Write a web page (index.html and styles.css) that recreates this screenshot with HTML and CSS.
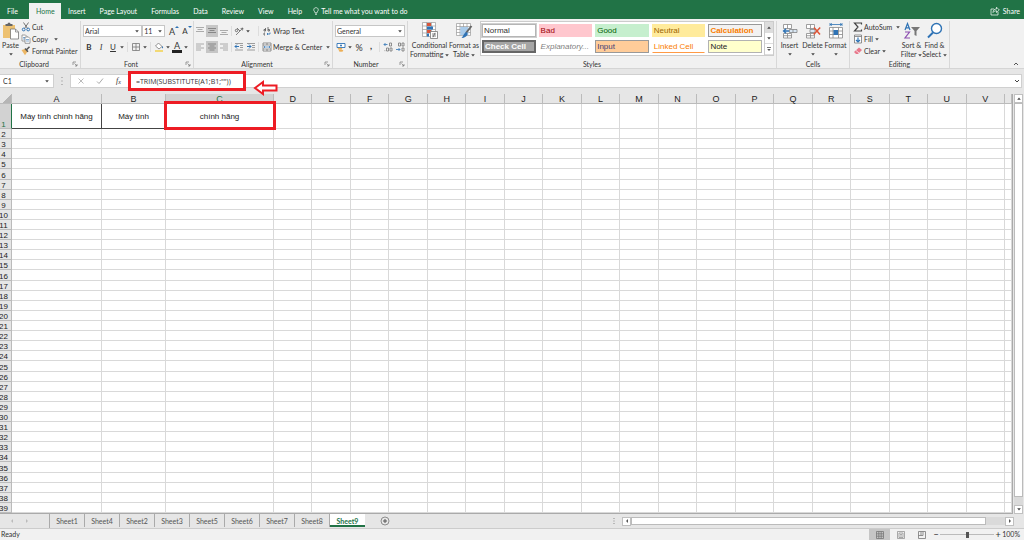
FILE: index.html
```html
<!DOCTYPE html>
<html lang="en">
<head>
<meta charset="utf-8">
<title>Spreadsheet</title>
<link rel="stylesheet" href="styles.css">
</head>
<body>
<svg class="defs" aria-hidden="true">
  <symbol id="caret" viewBox="0 0 4 3"><path d="M0.200 .3h3.600L2 2.600z" fill="#444"/></symbol>
  <symbol id="launch" viewBox="0 0 6 6"><path d="M1 4V1h3M2.500 2.500L5 5M5 3v2H3" fill="none" stroke="#777" stroke-width=".7"/></symbol>
  <symbol id="lines" viewBox="0 0 10 10"><path d="M1 2.500h8M2.500 4.500h5M1 6.500h8" fill="none" stroke="#777" stroke-width=".8"/></symbol>
  <symbol id="cellgrid" viewBox="0 0 16 16"><path d="M1.500 1.500h8v4h-8zM5.500 1.500v4M1.500 10.500h8v4.500h-8zM5.500 10.500v4.500M1.500 12.700h8" fill="#fff" stroke="#888" stroke-width=".8"/></symbol>
</svg>

<header class="menubar">
  <nav class="menu">
    <a href="#">File</a><a href="#" class="current">Home</a><a href="#">Insert</a><a href="#">Page Layout</a><a href="#">Formulas</a><a href="#">Data</a><a href="#">Review</a><a href="#">View</a><a href="#">Help</a>
  </nav>
  <button class="tell"><svg class="i8" viewBox="0 0 8 8"><path d="M3 6V5C1 3.500 1.500 .7 4 .7S7 3.500 5 5v1zM3 7.300h2" fill="none" stroke="#fff" stroke-width=".7"/></svg>Tell me what you want to do</button>
  <button class="share"><svg class="i10" viewBox="0 0 10 10"><path d="M4 3H1v6h7V6M3 6.500C3 4 4.500 3 6.500 3V1.200L9.300 4 6.500 6.500V4.800C5 4.800 4 5.200 3 6.500z" fill="none" stroke="#fff" stroke-width=".7"/></svg>Share</button>
</header>

<section class="ribbon">
  <div class="group clipboard">
    <div class="body">
      <button class="big paste"><svg class="i18" viewBox="0 0 18 18"><path d="M1 3h12v13H1z" fill="#edc171"/><path d="M3.500 4V2h2L6 .8h2L8.500 2h2v2z" fill="#666"/><path d="M8.500 7h5l3 3v7h-8z" fill="#fff" stroke="#777" stroke-width=".8"/><path d="M13.500 7v3h3" fill="none" stroke="#777" stroke-width=".7"/></svg><span>Paste</span><svg class="caret"><use href="#caret"/></svg></button>
      <div class="stack">
        <button><svg class="i10" viewBox="0 0 10 10"><path d="M2.500 .5l4 6M7.500 .5l-4 6" stroke="#666" stroke-width=".9"/><circle cx="2.700" cy="7.500" r="1.400" fill="none" stroke="#2f73b5"/><circle cx="7.200" cy="7.500" r="1.400" fill="none" stroke="#2f73b5"/></svg>Cut</button>
        <button><svg class="i10" viewBox="0 0 10 10"><path d="M1 1h3.500l1.500 1.500V7H1z" fill="#fff" stroke="#777" stroke-width=".7"/><path d="M4 3h3.500L9 4.500V9.300H4z" fill="#fff" stroke="#777" stroke-width=".7"/><path d="M2 3.500h2M2 5h2M5 5.500h3M5 7h3" stroke="#2f73b5" stroke-width=".6"/></svg>Copy<svg class="caret far"><use href="#caret"/></svg></button>
        <button><svg class="i10" viewBox="0 0 10 10"><path d="M.5 4L4 3l2.500 2.500L4 9.300z" fill="#edb765"/><path d="M4 2.500L7 5.700M5.500 3.800L8.500 .8" stroke="#555" stroke-width="1.500"/></svg>Format Painter</button>
      </div>
    </div>
    <div class="caption">Clipboard<svg class="launch"><use href="#launch"/></svg></div>
  </div>

  <div class="group font">
    <div class="body rows">
      <div class="row">
        <span class="pick fontname"><select aria-label="Font"><option>Arial</option></select><svg class="caret"><use href="#caret"/></svg></span>
        <span class="pick fontsize"><select aria-label="Font size"><option>11</option></select><svg class="caret"><use href="#caret"/></svg></span>
        <button class="tool grow" aria-label="Increase font size"><span>A</span><svg class="tick" viewBox="0 0 4 4"><path d="M0 3L2 1l2 2z" fill="#2f73b5"/></svg></button>
        <button class="tool shrink" aria-label="Decrease font size"><span>A</span><svg class="tick" viewBox="0 0 4 4"><path d="M0 1h4L2 3z" fill="#2f73b5"/></svg></button>
      </div>
      <div class="row">
        <button class="tool bold">B</button><button class="tool italic">I</button><button class="tool under">U</button><svg class="caret"><use href="#caret"/></svg>
        <i class="sep"></i>
        <button class="tool" aria-label="Borders"><svg class="i10" viewBox="0 0 10 10"><path d="M1.500 1.500h7v7h-7zM5 1.500v7M1.500 5h7" fill="none" stroke="#777" stroke-width=".8"/></svg></button><svg class="caret"><use href="#caret"/></svg>
        <i class="sep"></i>
        <button class="tool" aria-label="Fill color"><svg class="i10" viewBox="0 0 10 10"><path d="M4.500 1L8 4.500 5 7 1.500 4z" fill="#fff" stroke="#777" stroke-width=".8"/><path d="M8.500 4c.8 1 .8 2 0 2.500-.7-.5-.7-1.500 0-2.500z" fill="#2f73b5"/><path d="M1 8h8v2H1z" fill="#f2d975"/></svg></button><svg class="caret"><use href="#caret"/></svg>
        <button class="tool fontcolor" aria-label="Font color">A</button><svg class="caret"><use href="#caret"/></svg>
      </div>
    </div>
    <div class="caption">Font<svg class="launch"><use href="#launch"/></svg></div>
  </div>

  <div class="group align">
    <div class="body rows">
      <div class="row">
        <button class="tool" aria-label="Top align"><svg class="i10" viewBox="0 0 10 10"><path d="M1 1.500h8M2.500 3.500h5M1 5.500h8" stroke="#999" stroke-width=".8"/></svg></button>
        <button class="tool on" aria-label="Middle align"><svg class="i10"><use href="#lines"/></svg></button>
        <button class="tool" aria-label="Bottom align"><svg class="i10" viewBox="0 0 10 10"><path d="M1 4.500h8M2.500 6.500h5M1 8.500h8" stroke="#999" stroke-width=".8"/></svg></button>
        <i class="sep"></i>
        <button class="tool" aria-label="Orientation"><svg class="i10" viewBox="0 0 10 10"><path d="M2 9L9 2M9 2L6.500 2.700M9 2L8.400 4.500" fill="none" stroke="#666" stroke-width=".8"/><circle cx="2.500" cy="4.500" r="1.200" fill="none" stroke="#555" stroke-width=".8"/><path d="M3 2l3 3" stroke="#555" stroke-width=".8"/></svg></button><svg class="caret"><use href="#caret"/></svg>
        <i class="sep wide"></i>
        <button class="labelled"><svg class="i10" viewBox="0 0 10 10"><path d="M3.500 2v3M6 1v4M6 3.500h1.500V5H6M3.500 3.500H2V5h1.500M3 9H2V7h1" fill="none" stroke="#555" stroke-width=".8"/><path d="M8 6.500V8H5M6 7L5 8l1 1" fill="none" stroke="#2f73b5" stroke-width=".8"/></svg>Wrap Text</button>
      </div>
      <div class="row">
        <button class="tool" aria-label="Align left"><svg class="i10" viewBox="0 0 10 10"><path d="M1 2h8M1 4h5M1 6h8M1 8h5" stroke="#999" stroke-width=".8"/></svg></button>
        <button class="tool on" aria-label="Center"><svg class="i10" viewBox="0 0 10 10"><path d="M1 2h8M2.500 4h5M1 6h8M2.500 8h5" stroke="#777" stroke-width=".8"/></svg></button>
        <button class="tool" aria-label="Align right"><svg class="i10" viewBox="0 0 10 10"><path d="M1 2h8M4 4h5M1 6h8M4 8h5" stroke="#999" stroke-width=".8"/></svg></button>
        <i class="sep"></i>
        <button class="tool" aria-label="Decrease indent"><svg class="i10" viewBox="0 0 10 10"><path d="M1 1.500h8M6 3.500h3M6 5.500h3M1 8h8" stroke="#888" stroke-width=".8"/><path d="M5 4.500H1M3 2.500l-2 2 2 2" fill="none" stroke="#2f73b5"/></svg></button>
        <button class="tool" aria-label="Increase indent"><svg class="i10" viewBox="0 0 10 10"><path d="M1 1.500h8M6 3.500h3M6 5.500h3M1 8h8" stroke="#888" stroke-width=".8"/><path d="M1 4.500h4M3 2.500l2 2-2 2" fill="none" stroke="#2f73b5"/></svg></button>
        <i class="sep wide2"></i>
        <button class="labelled"><svg class="i10" viewBox="0 0 10 10"><path d="M1 1h8v8H1zM1 3h8M1 7h8M5 1v2M5 7v2" fill="#fff" stroke="#777" stroke-width=".8"/><path d="M2 5h6M3 4L2 5l1 1M7 4l1 1-1 1" fill="none" stroke="#2f73b5" stroke-width=".7"/></svg>Merge &amp; Center<svg class="caret near"><use href="#caret"/></svg></button>
      </div>
    </div>
    <div class="caption">Alignment<svg class="launch"><use href="#launch"/></svg></div>
  </div>

  <div class="group number">
    <div class="body rows">
      <div class="row"><span class="pick format"><select aria-label="Number format"><option>General</option></select><svg class="caret"><use href="#caret"/></svg></span></div>
      <div class="row">
        <button class="tool" aria-label="Accounting format"><svg class="i10" viewBox="0 0 10 10"><path d="M1 1.500h8v4H1z" fill="#fff" stroke="#2f73b5" stroke-width=".9"/><circle cx="5" cy="3.500" r="1" fill="#2f73b5"/><ellipse cx="4" cy="6.800" rx="2.300" ry="1" fill="#edae55"/><ellipse cx="5" cy="8.700" rx="2.300" ry="1" fill="#edae55"/></svg></button><svg class="caret"><use href="#caret"/></svg>
        <button class="tool percent">%</button><button class="tool comma">,</button>
        <i class="sep"></i>
        <button class="tool" aria-label="Increase decimal"><svg class="i10" viewBox="0 0 10 10"><path d="M4.500 2.500H1M2.500 1L1 2.500 2.500 4" fill="none" stroke="#2f73b5" stroke-width=".8"/><path d="M6.500 1h2v3h-2zM3.500 6h2v3h-2zM7 6h2v3H7zM1.500 8.700h.8" fill="none" stroke="#777" stroke-width=".8"/></svg></button>
        <button class="tool" aria-label="Decrease decimal"><svg class="i10" viewBox="0 0 10 10"><path d="M1 7.500h4M3.500 6L5 7.500 3.500 9" fill="none" stroke="#2f73b5" stroke-width=".8"/><path d="M3.500 1h2v3h-2zM7 1h2v3H7zM7 6h2v3H7z" fill="none" stroke="#777" stroke-width=".8"/></svg></button>
      </div>
    </div>
    <div class="caption">Number<svg class="launch"><use href="#launch"/></svg></div>
  </div>

  <div class="group styles">
    <div class="body">
      <button class="big cond"><svg class="i18" viewBox="0 0 18 18"><path d="M1.500 .5h13v14h-13zM5.500 .5v14M10.500 .5v14M1.500 4h13M1.500 7.500h13M1.500 11h13" fill="#fff" stroke="#999" stroke-width=".7"/><path d="M6 1h4v3H6zM6 8h4v3H6z" fill="#d8553a"/><path d="M6 4.500h6v3H6zM6 11.500h2v3H6z" fill="#2f73b5"/><path d="M9.500 9.500h7v7h-7z" fill="#fff" stroke="#777" stroke-width=".8"/><path d="M11 12h4M11 14h4M14 10.800l-2 4.500" stroke="#555" stroke-width=".7"/></svg><span>Conditional<br>Formatting <svg class="caret"><use href="#caret"/></svg></span></button>
      <button class="big fmt"><svg class="i18" viewBox="0 0 18 18"><path d="M1.500 1.500h14v12h-14zM5 1.500v12M8.500 1.500v12M12 1.500v12M1.500 4.500h14M1.500 7.500h14M1.500 10.500h14" fill="#fff" stroke="#999" stroke-width=".7"/><path d="M5.300 5h8v8.200h-8z" fill="#a9cbea"/><path d="M16.500 4L11 11" stroke="#666" stroke-width="2"/><path d="M11.500 10c1.500 1 1.500 3-.5 4.500-1.500 1-3 1.500-4.500 1.500 2-1.500 2-5 5-6z" fill="#2f73b5"/></svg><span>Format as<br>Table <svg class="caret"><use href="#caret"/></svg></span></button>
      <div class="gallery">
        <div class="swatches">
          <button class="normal">Normal</button><button class="bad">Bad</button><button class="good">Good</button><button class="neutral">Neutral</button><button class="calc">Calculation</button>
          <button class="check">Check Cell</button><button class="expl">Explanatory...</button><button class="inputcell">Input</button><button class="linked">Linked Cell</button><button class="note">Note</button>
        </div>
        <div class="scroller"><button class="off" aria-label="Previous styles"><svg class="caret flip"><use href="#caret"/></svg></button><button aria-label="Next styles"><svg class="caret"><use href="#caret"/></svg></button><button aria-label="More styles"><svg class="more" viewBox="0 0 4 5"><path d="M0 .5h4" stroke="#555" stroke-width=".8"/><path d="M.2 2h3.600L2 4z" fill="#555"/></svg></button></div>
      </div>
    </div>
    <div class="caption">Styles</div>
  </div>

  <div class="group cells">
    <div class="body">
      <button class="big"><svg class="i16" viewBox="0 0 16 16"><use href="#cellgrid"/><path d="M7.500 6.500H15v3H7.500zM11 6.500v3" fill="#d8e6f3" stroke="#777" stroke-width=".7"/><path d="M7 8H1.500M4 5.700L1.500 8 4 10.300" fill="none" stroke="#2f73b5" stroke-width="1.300"/></svg><span>Insert</span><svg class="caret"><use href="#caret"/></svg></button>
      <button class="big"><svg class="i16" viewBox="0 0 16 16"><use href="#cellgrid"/><path d="M5 6.500h5v3H5z" fill="#d8e6f3" stroke="#777" stroke-width=".7"/><path d="M9 4.500l6 7M15.200 4.500l-6.500 7" stroke="#df5537" stroke-width="1.500"/></svg><span>Delete</span><svg class="caret"><use href="#caret"/></svg></button>
      <button class="big"><svg class="i16" viewBox="0 0 16 16"><path d="M1.500 4.500h13V15h-13zM5 4.500V15M10.500 4.500V15M1.500 8h13M1.500 11.500h13" fill="#fff" stroke="#888" stroke-width=".8"/><path d="M5.500 7h4.500v5H5.500z" fill="#2f73b5"/><path d="M2 1.500h12M2 0v3M14 0v3M4 .3L2.500 1.500 4 2.700M12 .3l1.500 1.200L12 2.700" fill="none" stroke="#2f73b5" stroke-width=".8"/></svg><span>Format</span><svg class="caret"><use href="#caret"/></svg></button>
    </div>
    <div class="caption">Cells</div>
  </div>

  <div class="group editing">
    <div class="body">
      <div class="stack">
        <button><svg class="i10" viewBox="0 0 10 10"><path d="M8.500 2.500V1h-7L5 5 1.500 9h7V7.500" fill="none" stroke="#444" stroke-width="1.200"/></svg>AutoSum<svg class="caret near"><use href="#caret"/></svg></button>
        <button><svg class="i10" viewBox="0 0 10 10"><path d="M1.500 1h7v8h-7zM1.500 2.500h7" fill="#fff" stroke="#777" stroke-width=".8"/><path d="M5 3.500V8M3 6l2 2 2-2" fill="none" stroke="#2f73b5" stroke-width="1.200"/></svg>Fill<svg class="caret"><use href="#caret"/></svg></button>
        <button><svg class="i10" viewBox="0 0 10 10"><path d="M6 1.500L9 4 5 8H3L1 6z" fill="#e8798c"/><path d="M3 4.500l3 2.500" stroke="#fff" stroke-width=".7"/></svg>Clear<svg class="caret"><use href="#caret"/></svg></button>
      </div>
      <button class="big"><svg class="i18" viewBox="0 0 18 18"><path d="M2 8L4.500 1.500 7 8M3 5.800h3" fill="none" stroke="#2f73b5" stroke-width="1.200"/><path d="M2 10h4.500L2 16h5" fill="none" stroke="#8c4fb0" stroke-width="1.200"/><path d="M8 5h9l-3.500 4v5l-2-1V9z" fill="#777"/></svg><span>Sort &amp;<br>Filter <svg class="caret"><use href="#caret"/></svg></span></button>
      <button class="big"><svg class="i18" viewBox="0 0 18 18"><circle cx="10.500" cy="6.500" r="5" fill="#fff" stroke="#2f73b5" stroke-width="1.400"/><path d="M7 10.500L2 15.500" stroke="#2f73b5" stroke-width="2"/></svg><span>Find &amp;<br>Select <svg class="caret"><use href="#caret"/></svg></span></button>
    </div>
    <div class="caption">Editing</div>
  </div>
  <button class="collapse" aria-label="Collapse the ribbon"><svg class="i8" viewBox="0 0 8 8"><path d="M2 5l2-2 2 2" fill="none" stroke="#555"/></svg></button>
</section>

<section class="formulabar">
  <span class="namebox"><input aria-label="Name box" value="C1"><svg class="caret"><use href="#caret"/></svg></span>
  <svg class="dots" viewBox="0 0 4 10"><path d="M2 1v1M2 4.500v1M2 8v1" stroke="#999" stroke-width="1.200"/></svg>
  <div class="entry">
    <button class="tool" aria-label="Cancel"><svg class="i8" viewBox="0 0 8 8"><path d="M1.500 1.500l5 5M6.500 1.500l-5 5" stroke="#aaa" stroke-width=".8"/></svg></button>
    <button class="tool" aria-label="Enter"><svg class="i8" viewBox="0 0 8 8"><path d="M1 4.500L3 6.500 7 1.500" fill="none" stroke="#aaa"/></svg></button>
    <button class="tool fx">f<small>x</small></button>
    <div class="formula"><input aria-label="Formula" value="=TRIM(SUBSTITUTE(A1;B1;&quot;&quot;))">
      <svg class="arrow" viewBox="0 0 26 16"><path d="M2 8l8-6v3.500h13.500v5H10V14z" fill="#fff" stroke="#ed1c24" stroke-width="2"/></svg>
    </div>
    <button class="expand" aria-label="Expand formula bar"><svg class="i8" viewBox="0 0 8 8"><path d="M2 3l2 2 2-2" fill="none" stroke="#444"/></svg></button>
  </div>
</section>

<main class="work">
  <table class="sheet" id="sheet"></table>
  <div class="vscroll"><button aria-label="Scroll up"><svg class="caret flip"><use href="#caret"/></svg></button><div class="track"><div class="thumb"></div></div><button aria-label="Scroll down"><svg class="caret"><use href="#caret"/></svg></button></div>
</main>

<footer>
  <div class="tabs">
    <div class="paging"><button aria-label="Previous sheet"><svg class="i6" viewBox="0 0 6 6"><path d="M4 1L2 3l2 2z" fill="#bbb"/></svg></button><button aria-label="Next sheet"><svg class="i6" viewBox="0 0 6 6"><path d="M2 1l2 2-2 2z" fill="#bbb"/></svg></button></div>
    <nav class="sheets"><a href="#">Sheet1</a><a href="#">Sheet4</a><a href="#">Sheet2</a><a href="#">Sheet3</a><a href="#">Sheet5</a><a href="#">Sheet6</a><a href="#">Sheet7</a><a href="#">Sheet8</a><a href="#" class="current">Sheet9</a></nav>
    <button class="add" aria-label="New sheet"><svg class="i10" viewBox="0 0 10 10"><circle cx="5" cy="5" r="4" fill="none" stroke="#777" stroke-width=".8"/><path d="M5 3v4M3 5h4" stroke="#555"/></svg></button>
    <div class="hscroll"><svg class="dots" viewBox="0 0 4 10"><path d="M2 2v1M2 4.500v1M2 7v1" stroke="#999" stroke-width="1.200"/></svg><button aria-label="Scroll left"><svg class="i6" viewBox="0 0 6 6"><path d="M4 1L2 3l2 2z" fill="#555"/></svg></button><div class="track"><div class="thumb"></div></div><button aria-label="Scroll right"><svg class="i6" viewBox="0 0 6 6"><path d="M2 1l2 2-2 2z" fill="#555"/></svg></button></div>
  </div>
  <div class="status">
    <span class="ready">Ready</span>
    <button class="view on" aria-label="Normal view"><svg class="i8" viewBox="0 0 8 8"><path d="M.5 .5h7v7h-7zM2.800 .5v7M5.200 .5v7M.5 2.800h7M.5 5.200h7" fill="none" stroke="#777" stroke-width=".8"/></svg></button>
    <button class="view" aria-label="Page layout view"><svg class="i8" viewBox="0 0 8 8"><path d="M.5 .5h7v7h-7zM2 2h4v4.500H2zM3 3.500h2M3 5h2" fill="none" stroke="#888" stroke-width=".7"/></svg></button>
    <button class="view" aria-label="Page break view"><svg class="i8" viewBox="0 0 8 8"><path d="M.5 .5h7v7h-7zM3 .5v4M5 .5v4M.5 4.500h4.500" fill="none" stroke="#777" stroke-width=".8"/></svg></button>
    <button class="zoomstep">−</button><input class="zoom" type="range" aria-label="Zoom" min="10" max="190" value="100"><button class="zoomstep">+</button>
    <span class="percentage">100%</span>
  </div>
</footer>
<script src="sheet.js"></script>
</body>
</html>
```

FILE: styles.css
```css
* { box-sizing: border-box; }
body { margin: 0; min-height: 100vh; display: flex; flex-direction: column; background: #e6e6e6; color: #333; font: 7px/9px Lato, "Open Sans", sans-serif; overflow: hidden; }
button { display: flex; align-items: center; border: 0; padding: 0; background: none; color: inherit; font: inherit; white-space: nowrap; }
input, select { font: inherit; color: inherit; border: 0; padding: 0; margin: 0; background: none; min-width: 0; outline: 0; }
select { appearance: none; width: 100%; height: 100%; }
a { color: inherit; text-decoration: none; }
svg { display: block; flex: none; }
.defs { display: none; }
.i6 { width: 6px; height: 6px; }
.i8 { width: 8px; height: 8px; }
.i10 { width: 10px; height: 10px; }
.i16 { width: 16px; height: 16px; }
.i18 { width: 18px; height: 18px; }
.caret { width: 4px; height: 3px; margin: 0 1px; }
.caret.far { margin-left: 5px; }
.caret.near { margin-left: 3px; }
.flip { transform: rotate(180deg); }

.menubar { height: 19px; background: #217346; color: #fff; display: flex; align-items: flex-end; }
.menu { display: flex; }
.menu a { height: 16px; line-height: 16px; padding: 0 7px; }
.menu a:first-child { width: 29px; }
.menu a.current { width: 32px; background: #f1f1f1; color: #217346; }
.tell { height: 16px; gap: 1px; margin-left: 3px; }
.share { height: 16px; gap: 3px; margin: 0 4px 0 auto; }

.ribbon { display: flex; height: 50px; background: #f1f1f1; border-bottom: 1px solid #d5d5d5; padding-top: 2px; }
.group { display: flex; flex-direction: column; border-right: 1px solid #d8d8d8; flex: none; }
.body { display: flex; height: 39px; }
.caption { position: relative; height: 8px; line-height: 8px; text-align: center; }
.launch { position: absolute; right: 2px; top: 1px; width: 6px; height: 6px; }
.clipboard { width: 81px; }
.clipboard .caption, .font .caption, .align .caption { padding-right: 12px; }
.font { width: 113px; }
.align { width: 139px; }
.number { width: 75px; }
.number .caption { padding-right: 8px; }
.styles { width: 369px; }
.cells { width: 73px; }
.editing { width: 100px; }
.collapse { margin: auto 4px 0 auto; }
.big { flex-direction: column; width: 23px; padding-top: 1px; text-align: center; line-height: 9px; }
.big > span { padding-top: 1px; }
.big > .caret { margin-top: 3px; }
.big span .caret { display: inline-block; vertical-align: middle; margin: 0; }
.paste { width: 21px; }
.cond { width: 39px; margin-left: 2px; }
.fmt { width: 30px; }
.cells .body { padding-left: 1px; }
.cells .i16 { margin: 1px 0; }
.stack { display: flex; flex-direction: column; }
.stack button { height: 12px; gap: 1px; }
.editing .stack { width: 50px; padding-left: 3px; }

.rows { flex-direction: column; padding: 2px 0 0 2px; }
.align .rows { padding-left: 0; }
.row { display: flex; align-items: center; height: 16px; }
.tool { width: 12px; height: 12px; flex: none; justify-content: center; }
.on { background: #c6c6c6; }
.sep { width: 1px; height: 10px; margin: 0 2px; background: #ddd; }
.align .sep { margin: 0 1px; }
.align .sep.wide { margin: 0 3px 0 7px; }
.align .sep.wide2 { margin: 0 3px 0 1px; }
.pick { position: relative; height: 12px; background: #fff; border: 1px solid #c6c6c6; padding-left: 1px; }
.pick .caret, .namebox .caret { position: absolute; right: 1px; top: 4px; }
.fontname { width: 60px; }
.fontsize { width: 23px; }
.format { width: 70px; }
.grow, .shrink { font-size: 9px; margin-left: 1px; }
.grow { margin-left: 3px; }
.shrink { font-size: 8px; }
.tick { width: 4px; height: 4px; align-self: flex-start; }
.bold { font-weight: 700; font-size: 8px; }
.italic { font: italic 8px/9px "Liberation Serif", serif; }
.under { text-decoration: underline; font-size: 8px; }
.fontcolor { height: 11px; width: 10px; margin: 0 1px; font-size: 9px; border-bottom: 3px solid #222; line-height: 8px; }
.percent { font-size: 9px; }
.comma { font-size: 9px; font-weight: 700; padding-bottom: 3px; }
.labelled { gap: 1px; }

.gallery { display: flex; width: 294px; height: 35px; margin-left: 1px; border: 1px solid #ccc; background: #fff; font: 8px/11px "Liberation Sans", Arial, sans-serif; }
.swatches { flex: 1; display: grid; grid-template-columns: repeat(5, 1fr); gap: 3px; padding: 2px 2px 2px 1px; }
.swatches button { height: 13px; padding-left: 1px; border: 1px solid transparent; }
.swatches .normal { border-color: #b5b5b5; outline: 1px solid #d0d0d0; }
.swatches .bad { background: #ffc7ce; color: #9c0006; }
.swatches .good { background: #c6efce; color: #006100; }
.swatches .neutral { background: #ffeb9c; color: #9c6500; }
.swatches .calc { background: #f2f2f2; color: #fa7d00; border-color: #999; font-weight: 700; }
.swatches .check { background: #a5a5a5; color: #fff; border: 2px solid #666; font-weight: 700; }
.swatches .expl { color: #7f7f7f; font-style: italic; }
.swatches .inputcell { background: #ffcc99; color: #3f3f76; border-color: #999; }
.swatches .linked { color: #fa7d00; border-bottom-color: #ff9a45; }
.swatches .note { background: #ffffcc; color: #222; border-color: #b2b2b2; }
.scroller { width: 9px; display: grid; grid-template-rows: repeat(3, 1fr); border-left: 1px solid #ccc; }
.scroller button { justify-content: center; border-bottom: 1px solid #ddd; }
.scroller .off { background: #ddd; }
.more { width: 4px; height: 5px; }

.formulabar { display: flex; align-items: center; height: 25px; padding: 5px 2px 6px 0; }
.namebox { position: relative; width: 54px; height: 14px; background: #fff; border: 1px solid #d0d0d0; border-left: 0; padding-left: 3px; }
.namebox input { width: 40px; height: 12px; }
.namebox .caret { top: 5px; right: 3px; }
.dots { width: 4px; height: 10px; margin: 0 6px; }
.entry { flex: 1; display: flex; align-items: center; height: 14px; background: #fff; border: 1px solid #d0d0d0; }
.entry .tool { width: 19px; }
.entry .fx { font: italic 8px/10px "Liberation Serif", serif; }
.fx small { font-size: 6px; padding-top: 2px; }
.formula { position: relative; flex: none; width: 118px; height: 20px; border: 3px solid #ed1c24; background: #fff; display: flex; z-index: 2; font: 7px/9px "Open Sans", "Noto Sans", sans-serif; }
.formula input { width: 100%; padding-left: 5px; }
.arrow { position: absolute; left: 122px; top: 6px; width: 26px; height: 16px; }
.expand { margin-left: auto; }

.work { flex: 1; display: flex; min-height: 0; }
.sheet { flex: 1; display: grid; grid-template-columns: 12px 90px 64px 108px repeat(19, 11fr) 2fr; grid-template-rows: 10px 25px repeat(38, minmax(0, 1fr)); background: #fff; font: 8px/10px "Liberation Sans", Arial, sans-serif; color: #222; border-right: 1px solid #aaa; border-bottom: 1px solid #aaa; }
.sheet thead, .sheet tbody, .sheet tr { display: contents; }
.sheet th, .sheet td { padding: 0; min-width: 0; border-right: 1px solid #d9d9d9; border-bottom: 1px solid #d9d9d9; font-weight: 400; text-align: center; }
.sheet th { background: #e6e6e6; border-color: #bbb; }
.sheet thead th { font-size: 9px; line-height: 10px; }
.sheet thead th:first-child { background: linear-gradient(135deg, #e6e6e6 60%, #b5b5b5 60%); }
.sheet tbody th { display: flex; align-items: flex-end; padding-right: 4px; justify-content: center; line-height: 7px; }
.sheet th.active { background: #d2d2d2; color: #217346; }
.sheet tbody th.active { border-right-color: #217346; }
.sheet td.filled { position: relative; line-height: 25px; border-color: #444; }
.sheet td.marked::after { content: ""; position: absolute; inset: -3px -3px -2px -2px; border: 3px solid #ed1c24; }

.vscroll { width: 10px; margin: 0 1px 0 0; padding-left: 1px; display: flex; flex-direction: column; }
.vscroll button, .hscroll button { width: 9px; height: 9px; flex: none; justify-content: center; background: #fff; border: 1px solid #c0c0c0; }
.vscroll button .caret { margin: 0; }
.vscroll .track { flex: 1; background: #dadada; }
.vscroll .thumb { height: 98%; background: #fff; border: 1px solid #bbb; }

.tabs { display: flex; height: 15px; align-items: center; padding-right: 10px; border-bottom: 1px solid #ccc; }
.paging { width: 49px; display: flex; gap: 9px; padding-left: 9px; }
.sheets { display: flex; align-self: stretch; border-left: 1px solid #aaa; }
.sheets a { width: 35px; height: 13px; line-height: 15px; text-align: center; border-right: 1px solid #aaa; color: #555; }
.sheets a.current { background: #fff; color: #217346; font-weight: 700; border-bottom: 2px solid #217346; border-right: 0; }
.add { margin-left: 15px; }
.hscroll { display: flex; align-items: center; width: 402px; margin-left: auto; }
.hscroll .dots { margin: 0 6px 0 0; }
.hscroll .track { flex: 1; height: 8px; background: #dadada; }
.hscroll .thumb { height: 100%; width: 95%; background: #fff; border: 1px solid #bbb; }
.status { display: flex; height: 11px; align-items: center; background: #f1f1f1; padding-right: 4px; }
.ready { margin-right: auto; padding-left: 1px; }
.view { width: 21px; height: 11px; justify-content: center; }
.zoomstep { width: 8px; height: 9px; justify-content: center; font-size: 9px; }
.zoom { appearance: none; width: 54px; height: 9px; background: linear-gradient(#bbb, #bbb) center / 100% 1px no-repeat; }
.zoom::-webkit-slider-thumb { appearance: none; width: 3px; height: 6px; background: #555; }
.percentage { width: 18px; text-align: right; }
```

FILE: sheet.js
```js
const columns = "ABCDEFGHIJKLMNOPQRSTUV".split("");
const cells = { A1: "Máy tính chính hãng", B1: "Máy tính", C1: "chính hãng" };
const active = { column: "C", row: 1 };

const head = columns
  .map((c) => `<th scope="col"${c === active.column ? ' class="active"' : ""}>${c}</th>`)
  .join("");

let body = "";
for (let row = 1; row <= 39; row++) {
  body += `<tr><th scope="row"${row === active.row ? ' class="active"' : ""}>${row}</th>`;
  for (const c of columns) {
    const text = cells[c + row];
    const marked = c === active.column && row === active.row ? " marked" : "";
    body += text ? `<td class="filled${marked}">${text}</td>` : "<td></td>";
  }
  body += "<td></td></tr>";
}

document.getElementById("sheet").innerHTML =
  `<thead><tr><th></th>${head}<th></th></tr></thead><tbody>${body}</tbody>`;
```
